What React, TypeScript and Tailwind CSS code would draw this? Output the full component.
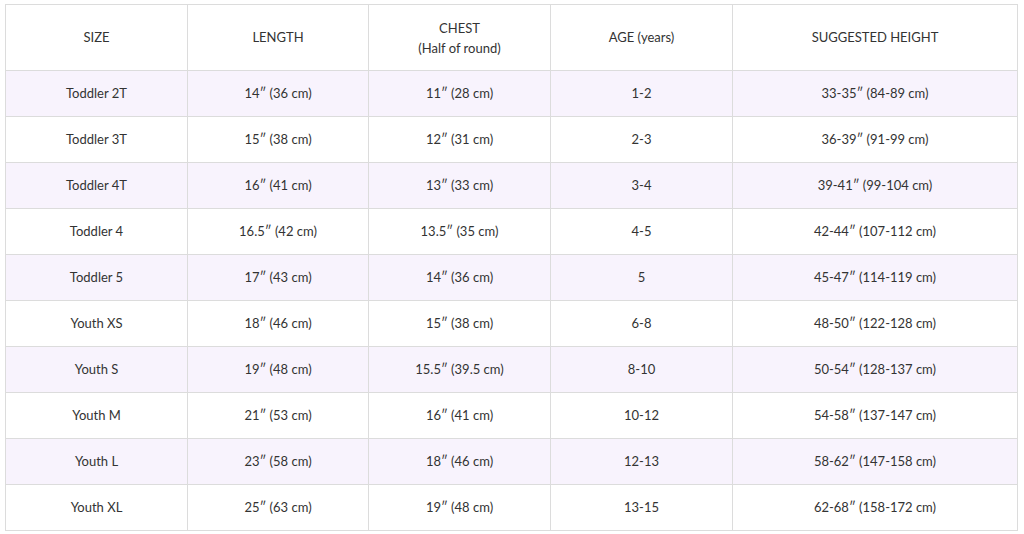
const rows = [
  ["Toddler 2T", "14″ (36 cm)", "11″ (28 cm)", "1-2", "33-35″ (84-89 cm)"],
  ["Toddler 3T", "15″ (38 cm)", "12″ (31 cm)", "2-3", "36-39″ (91-99 cm)"],
  ["Toddler 4T", "16″ (41 cm)", "13″ (33 cm)", "3-4", "39-41″ (99-104 cm)"],
  ["Toddler 4", "16.5″ (42 cm)", "13.5″ (35 cm)", "4-5", "42-44″ (107-112 cm)"],
  ["Toddler 5", "17″ (43 cm)", "14″ (36 cm)", "5", "45-47″ (114-119 cm)"],
  ["Youth XS", "18″ (46 cm)", "15″ (38 cm)", "6-8", "48-50″ (122-128 cm)"],
  ["Youth S", "19″ (48 cm)", "15.5″ (39.5 cm)", "8-10", "50-54″ (128-137 cm)"],
  ["Youth M", "21″ (53 cm)", "16″ (41 cm)", "10-12", "54-58″ (137-147 cm)"],
  ["Youth L", "23″ (58 cm)", "18″ (46 cm)", "12-13", "58-62″ (147-158 cm)"],
  ["Youth XL", "25″ (63 cm)", "19″ (48 cm)", "13-15", "62-68″ (158-172 cm)"],
];

export default function App() {
  return (
    <div className="w-[1024px] h-[534px] bg-white pt-[4px] pl-[5px] font-['Lato','Open_Sans',sans-serif] text-[13px] text-[#333]">
      <table className="w-[1013px] border-collapse table-fixed text-center">
        <colgroup>
          <col className="w-[182px]" />
          <col className="w-[181px]" />
          <col className="w-[182px]" />
          <col className="w-[182px]" />
          <col />
        </colgroup>
        <thead>
          <tr className="h-[66px]">
            <th className="border border-[#dcdcdc] font-normal">SIZE</th>
            <th className="border border-[#dcdcdc] font-normal">LENGTH</th>
            <th className="border border-[#dcdcdc] font-normal leading-[20px]">
              CHEST
              <br />
              (Half of round)
            </th>
            <th className="border border-[#dcdcdc] font-normal">AGE (years)</th>
            <th className="border border-[#dcdcdc] font-normal">SUGGESTED HEIGHT</th>
          </tr>
        </thead>
        <tbody>
          {rows.map((r, i) => (
            <tr key={r[0]} className={i % 2 === 0 ? "h-[46px] bg-[#f8f3fd]" : "h-[46px] bg-white"}>
              {r.map((c, j) => (
                <td key={j} className="border border-[#dcdcdc]">
                  {c}
                </td>
              ))}
            </tr>
          ))}
        </tbody>
      </table>
    </div>
  );
}
